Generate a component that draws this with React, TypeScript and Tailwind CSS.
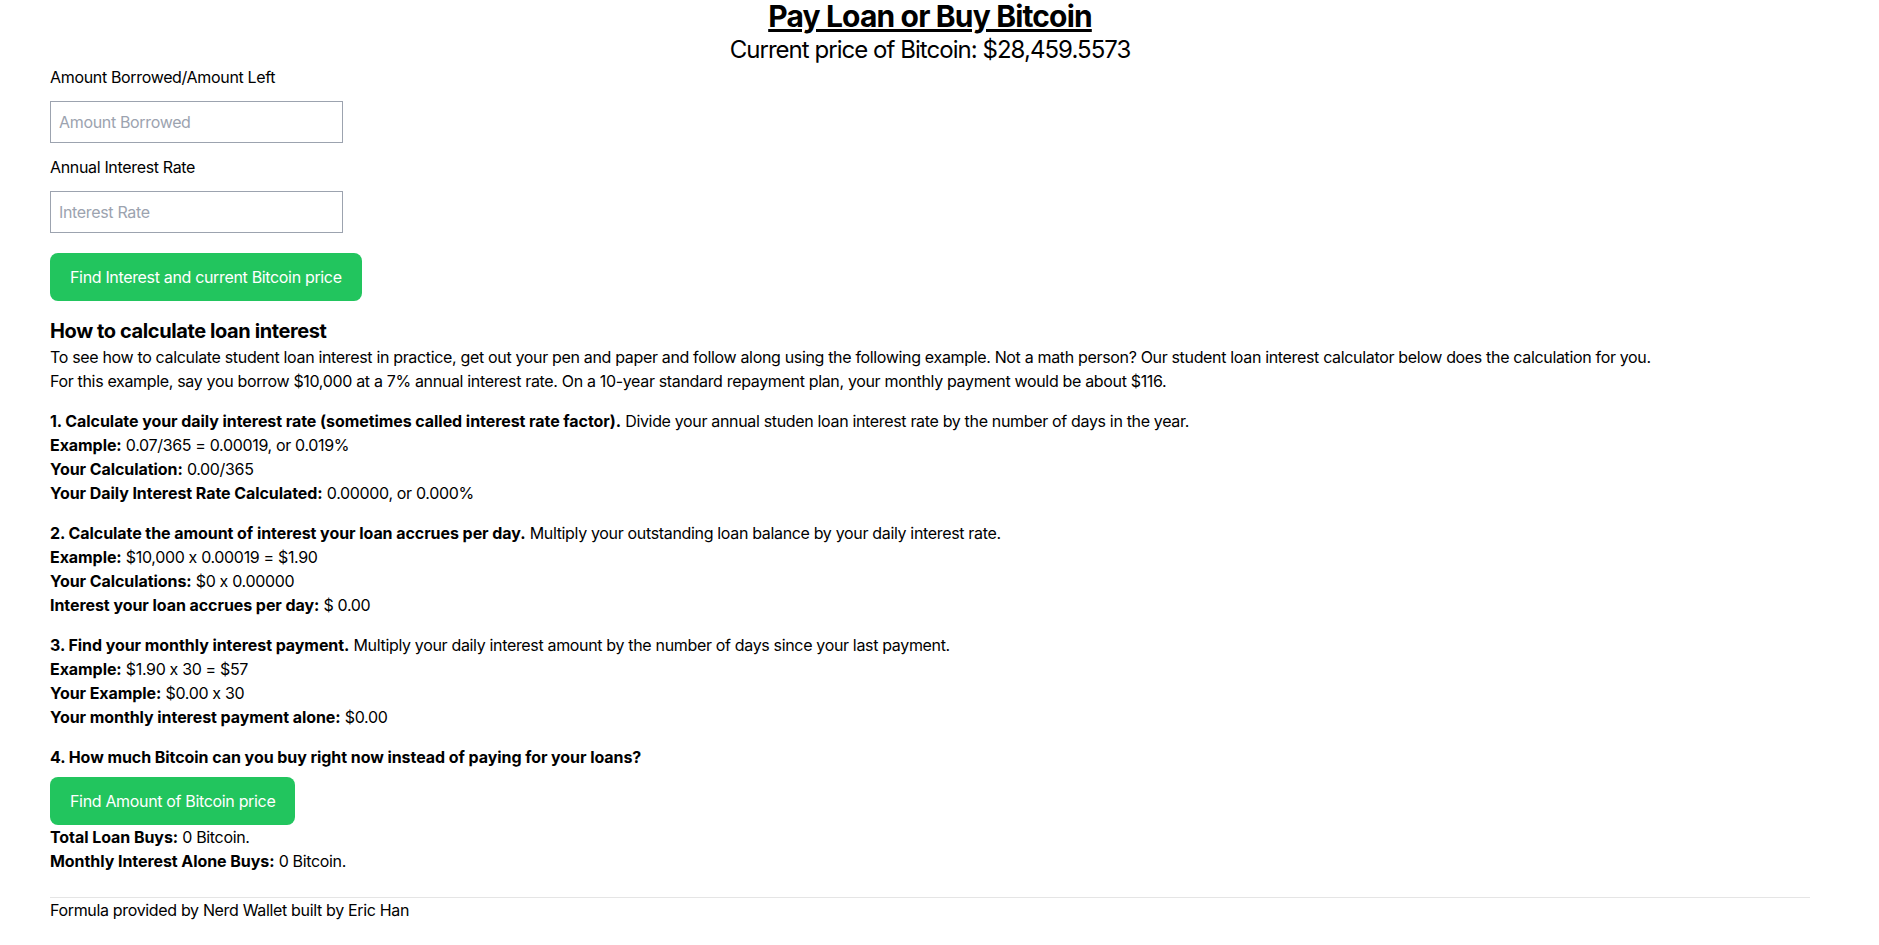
import React from 'react';

const font = { fontFamily: 'Inter, "Noto Sans", sans-serif' };

export default function App() {
  return (
    <div
      className="min-h-screen bg-white text-black tracking-[-0.021em] [font-feature-settings:'calt'_0] [&_b]:tracking-[-0.004em]"
      style={font}
    >
      <div className="pl-[50px] pr-[69px]">
        <h1 className="text-3xl leading-8 font-bold underline text-center tracking-[-0.028em]">Pay Loan or Buy Bitcoin</h1>
        <p className="mt-[2px] text-2xl leading-8 text-center tracking-[-0.04em]">Current price of Bitcoin: $28,459.5573</p>

        <label className="block -mt-px text-base leading-6">Amount Borrowed/Amount Left</label>
        <input
          type="text"
          placeholder="Amount Borrowed"
          className="block mt-3 w-[293px] border border-[#9ca3af] px-2 py-2 text-base leading-6 placeholder:text-[#9ca3af] outline-none"
        />

        <label className="block mt-3 text-base leading-6">Annual Interest Rate</label>
        <input
          type="text"
          placeholder="Interest Rate"
          className="block mt-3 w-[293px] border border-[#9ca3af] px-2 py-2 text-base leading-6 placeholder:text-[#9ca3af] outline-none"
        />

        <button className="block mt-5 rounded-lg bg-[#22c55e] px-5 py-3 text-base leading-6 text-white">
          Find Interest and current Bitcoin price
        </button>

        <h2 className="mt-4 text-xl leading-7 font-bold tracking-[-0.02em]">How to calculate loan interest</h2>
        <p className="text-base leading-6">
          To see how to calculate student loan interest in practice, get out your pen and paper and follow along using the following example. Not a math person? Our student loan interest calculator below does the calculation for you.
        </p>
        <p className="text-base leading-6">
          For this example, say you borrow $10,000 at a 7% annual interest rate. On a 10-year standard repayment plan, your monthly payment would be about $116.
        </p>

        <div className="mt-4 text-base leading-6">
          <p><b>1. Calculate your daily interest rate (sometimes called interest rate factor).</b> Divide your annual studen loan interest rate by the number of days in the year.</p>
          <p><b>Example:</b> 0.07/365 = 0.00019, or 0.019%</p>
          <p><b>Your Calculation:</b> 0.00/365</p>
          <p><b>Your Daily Interest Rate Calculated:</b> 0.00000, or 0.000%</p>
        </div>

        <div className="mt-4 text-base leading-6">
          <p><b>2. Calculate the amount of interest your loan accrues per day.</b> Multiply your outstanding loan balance by your daily interest rate.</p>
          <p><b>Example:</b> $10,000 x 0.00019 = $1.90</p>
          <p><b>Your Calculations:</b> $0 x 0.00000</p>
          <p><b>Interest your loan accrues per day:</b> $ 0.00</p>
        </div>

        <div className="mt-4 text-base leading-6">
          <p><b>3. Find your monthly interest payment.</b> Multiply your daily interest amount by the number of days since your last payment.</p>
          <p><b>Example:</b> $1.90 x 30 = $57</p>
          <p><b>Your Example:</b> $0.00 x 30</p>
          <p><b>Your monthly interest payment alone:</b> $0.00</p>
        </div>

        <div className="mt-4 text-base leading-6">
          <p><b>4. How much Bitcoin can you buy right now instead of paying for your loans?</b></p>
          <button className="block mt-2 rounded-lg bg-[#22c55e] px-5 py-3 text-base leading-6 text-white">
            Find Amount of Bitcoin price
          </button>
          <p><b>Total Loan Buys:</b> 0 Bitcoin.</p>
          <p><b>Monthly Interest Alone Buys:</b> 0 Bitcoin.</p>
        </div>

        <hr className="mt-6 border-[#e5e5e5]" />
        <p className="text-base leading-6">Formula provided by Nerd Wallet built by Eric Han</p>
      </div>
    </div>
  );
}
